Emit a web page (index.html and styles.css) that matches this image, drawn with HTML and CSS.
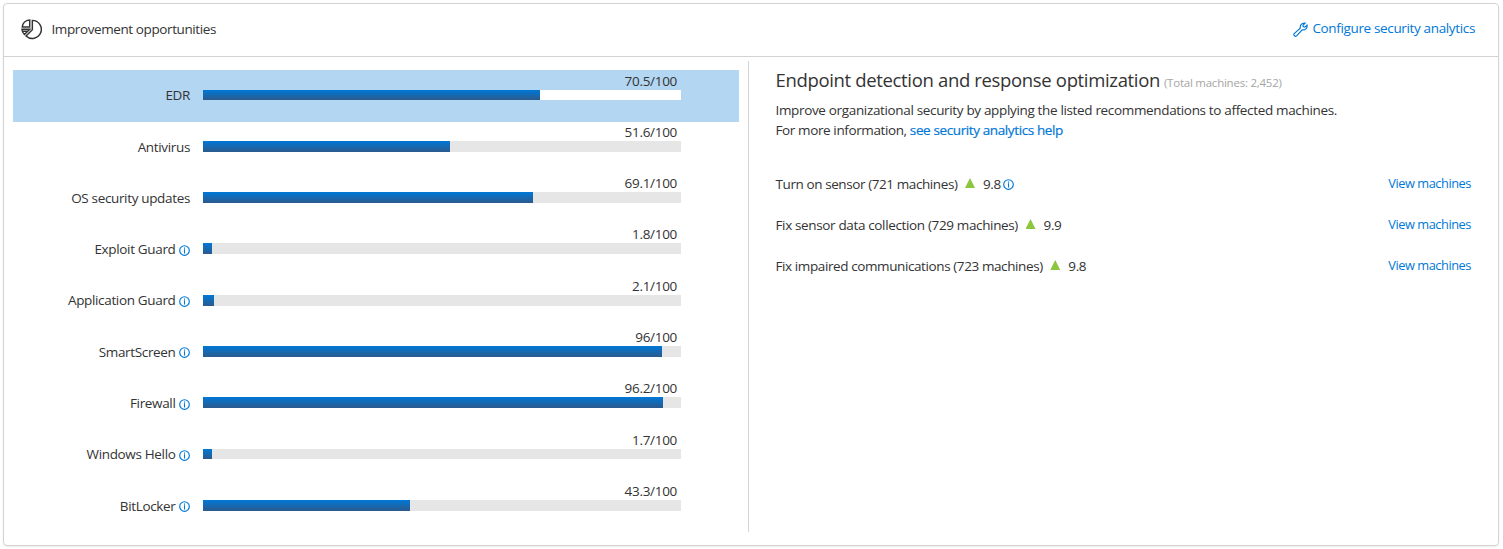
FILE: index.html
```
<!DOCTYPE html>
<html lang="en">
<head>
<meta charset="utf-8">
<title>Improvement opportunities</title>
<link rel="stylesheet" href="styles.css">
</head>
<body>
<svg width="0" height="0" class="defs">
  <symbol id="info" viewBox="0 0 11 11"><circle cx="5.5" cy="5.5" r="4.8" fill="none" stroke="currentColor" stroke-width="1.15"/><path d="M5.5 2.6v1.2M5.5 4.3v4.1" stroke="currentColor" stroke-width="1.1"/></symbol>
</svg>
<section class="card">
  <header class="card-header">
    <svg class="pie" viewBox="0 0 20 20" fill="none" stroke="#333" stroke-width="1.400"><path d="M10.800 1.300A8.600 8.600 0 1 1 4.800 16.100L10.800 10.200z"/><path d="M8.300.900v6.800H1.200C1.500 3.900 4.400 1.100 8.300.900z"/><path d="M.900 9.800h7.400l-5 4.900C1.900 13.400 1 11.800.900 9.800zM1.600 11.600h4.300"/></svg>
    <h1 class="title">Improvement opportunities</h1>
    <a class="configure"><svg class="wrench" viewBox="0 0 15 15" fill="none" stroke="currentColor" stroke-width="1.200"><path d="M1.200 11.600L7.300 6.100C6.700 3.200 8.900.700 12 1.100L9.900 3.300l.4 1.500 1.500.4 2.200-2.100c.7 3.100-1.900 5.300-4.800 4.700l-5.600 6.100c-1.500 1.200-3.500-.8-2.400-2.300z"/></svg><span>Configure security analytics</span></a>
  </header>
  <div class="card-body">
    <div class="chart">
      <div class="row selected"><div class="label"><span>EDR</span></div><div class="meter"><span class="score">70.5/100</span><div class="track"><div class="fill" style="width:70.5%"></div></div></div></div>
      <div class="row"><div class="label"><span>Antivirus</span></div><div class="meter"><span class="score">51.6/100</span><div class="track"><div class="fill" style="width:51.6%"></div></div></div></div>
      <div class="row"><div class="label"><span>OS security updates</span></div><div class="meter"><span class="score">69.1/100</span><div class="track"><div class="fill" style="width:69.1%"></div></div></div></div>
      <div class="row"><div class="label"><span>Exploit Guard</span><svg class="info"><use href="#info"/></svg></div><div class="meter"><span class="score">1.8/100</span><div class="track"><div class="fill" style="width:1.8%"></div></div></div></div>
      <div class="row"><div class="label"><span>Application Guard</span><svg class="info"><use href="#info"/></svg></div><div class="meter"><span class="score">2.1/100</span><div class="track"><div class="fill" style="width:2.2%"></div></div></div></div>
      <div class="row"><div class="label"><span>SmartScreen</span><svg class="info"><use href="#info"/></svg></div><div class="meter"><span class="score">96/100</span><div class="track"><div class="fill" style="width:96%"></div></div></div></div>
      <div class="row"><div class="label"><span>Firewall</span><svg class="info"><use href="#info"/></svg></div><div class="meter"><span class="score">96.2/100</span><div class="track"><div class="fill" style="width:96.2%"></div></div></div></div>
      <div class="row"><div class="label"><span>Windows Hello</span><svg class="info"><use href="#info"/></svg></div><div class="meter"><span class="score">1.7/100</span><div class="track"><div class="fill" style="width:1.8%"></div></div></div></div>
      <div class="row"><div class="label"><span>BitLocker</span><svg class="info"><use href="#info"/></svg></div><div class="meter"><span class="score">43.3/100</span><div class="track"><div class="fill" style="width:43.3%"></div></div></div></div>
    </div>
    <div class="details">
      <div class="heading"><h2 class="subject">Endpoint detection and response optimization</h2><span class="total">(Total machines: 2,452)</span></div>
      <p class="intro"><span class="line-one">Improve organizational security by applying the listed recommendations to affected machines.</span><br><span class="line-two">For more information, <a class="help">see security analytics help</a></span></p>
      <ul class="actions">
        <li class="action"><span class="name n1">Turn on sensor (721 machines)</span><i class="up"></i><span class="gain">9.8</span><svg class="info"><use href="#info"/></svg><a class="view">View machines</a></li>
        <li class="action"><span class="name n2">Fix sensor data collection (729 machines)</span><i class="up"></i><span class="gain">9.9</span><a class="view">View machines</a></li>
        <li class="action"><span class="name n3">Fix impaired communications (723 machines)</span><i class="up"></i><span class="gain">9.8</span><a class="view">View machines</a></li>
      </ul>
    </div>
  </div>
</section>
</body>
</html>
```
FILE: styles.css
```
* { box-sizing: border-box; }
body { margin: 0; padding: 3px 4px 3px 3px; height: 549px; background: #fff; color: #333; font: 13.500px/20px "Open Sans", "Noto Sans", sans-serif; letter-spacing: -0.340px; white-space: nowrap; }
h1, h2, p, ul { margin: 0; padding: 0; font-weight: 400; }
a { color: #0078d7; }
.defs { position: absolute; }
.card { height: 543px; border: 1px solid #d3d3d3; border-radius: 4px; box-shadow: 0 1px 2px rgba(0,0,0,.08); }
.card-header { height: 53px; border-bottom: 1px solid #d3d3d3; display: flex; align-items: center; padding: 0 23px 2px 17px; }
.pie { width: 21px; height: 21px; flex: none; margin-right: 9.500px; }
.title { font-size: 13.500px; letter-spacing: -0.400px; }
.configure { margin-left: auto; display: flex; align-items: center; gap: 4px; letter-spacing: -0.350px; }
.configure span { margin-top: -2px; }
.wrench { width: 15px; height: 15px; }
.card-body { display: flex; height: 488px; }
.chart { width: 745px; height: 471px; margin-top: 4px; padding: 8.500px 9px 0; border-right: 1px solid #d3d3d3; }
.row { height: 51.3px; display: flex; }
.row.selected { height: 52.300px; margin-bottom: -1px; background: #b3d6f2; }
.label { width: 177px; height: 20px; margin-top: 15.800px; display: flex; justify-content: flex-end; align-items: center; gap: 3.500px; }
.info { width: 11px; height: 11px; color: #0078d7; flex: none; margin-top: 2px; }
.meter { width: 478px; margin-left: 13px; }
.score { display: block; height: 20px; line-height: 22px; padding-right: 4px; text-align: right; letter-spacing: -0.300px; }
.track { height: 10.850px; background: #e6e6e6; }
.selected .track { background: #fff; }
.fill { height: 100%; background: linear-gradient(#0078d7, #2b5a8c); }
.details { flex: 1; padding: 9px 27px 0 26.500px; }
.heading { display: flex; align-items: baseline; gap: 4px; height: 34px; line-height: 28px; }
.subject { font-size: 18.500px; letter-spacing: -0.340px; }
.total { font-size: 11.500px; letter-spacing: -0.240px; color: #a6a6a6; }
.line-two { letter-spacing: -0.385px; }
.help { -webkit-text-stroke: .2px #0078d7; }
.actions { list-style: none; margin-top: 34px; }
.action { height: 41px; display: flex; align-items: flex-start; }
.n1 { letter-spacing: -0.410px; }
.n2 { letter-spacing: -0.355px; }
.n3 { letter-spacing: -0.400px; }
.up { width: 10px; height: 10px; margin: 4px 8px 0 7.500px; background: #8cc63f; clip-path: polygon(50% 0, 100% 100%, 0 100%); }
.action .info { margin: 5px 0 0 2.500px; }
.view { margin: 0 0 0 auto; font-size: 12.800px; letter-spacing: -0.450px; line-height: 19px; }
```
